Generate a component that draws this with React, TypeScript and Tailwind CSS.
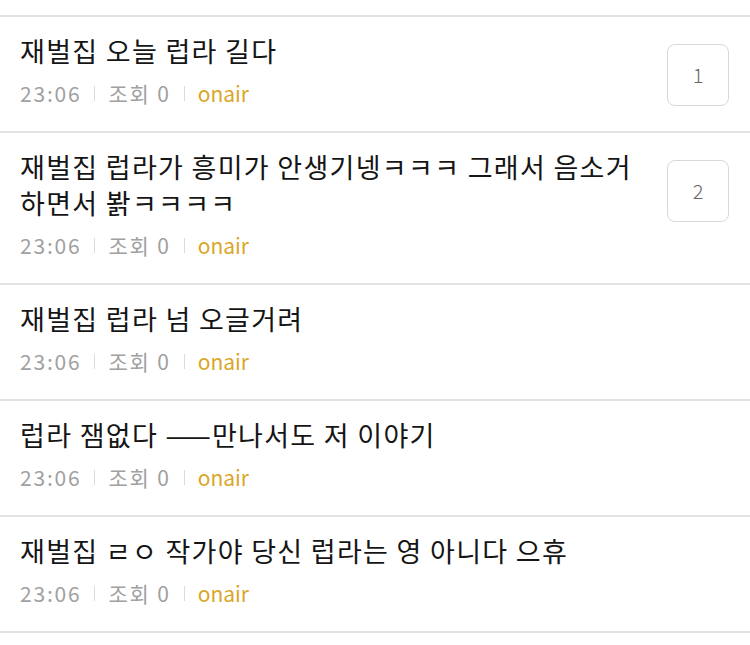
const posts = [
  { title: "재벌집 오늘 럽라 길다", comments: 1 },
  { title: "재벌집 럽라가 흥미가 안생기넹ㅋㅋㅋ 그래서 음소거 하면서 봙ㅋㅋㅋㅋ", comments: 2 },
  { title: "재벌집 럽라 넘 오글거려" },
  { title: "럽라 잼없다 ——만나서도 저 이야기" },
  { title: "재벌집 ㄹㅇ 작가야 당신 럽라는 영 아니다 으휴" },
];

function Pipe() {
  return <span className="mx-[13px] inline-block h-[15px] w-px bg-[#dcdcdc]" />;
}

export default function App() {
  return (
    <div className="min-h-[645px] bg-white pt-[15px] font-['Noto_Sans_CJK_KR','Noto_Sans',sans-serif]">
      <div className="border-t-2 border-[#e3e3e3]">
        {posts.map((p, i) => (
          <div key={i} className="flex items-start border-b-2 border-[#e3e3e3] pl-5 pr-[21px]">
            <div className="flex-1 pt-4 pb-6">
              <div className="break-keep pr-4 text-[27px] leading-[36px] tracking-[1.3px] text-[#151515]">
                {p.title}
              </div>
              <div className="mt-[10px] flex items-center text-[21px] leading-[28px] text-[#a0a0a0]">
                <span className="tracking-[1.8px]">23:06</span>
                <Pipe />
                <span className="tracking-[1.8px]">조회 0</span>
                <Pipe />
                <span className="text-[#dba628]">onair</span>
              </div>
            </div>
            {p.comments !== undefined && (
              <div className="mt-[27px] flex h-[62px] w-[62px] shrink-0 items-center justify-center rounded-lg border border-[#d8d8d8] text-[20px] font-light text-[#666]">
                {p.comments}
              </div>
            )}
          </div>
        ))}
      </div>
    </div>
  );
}
